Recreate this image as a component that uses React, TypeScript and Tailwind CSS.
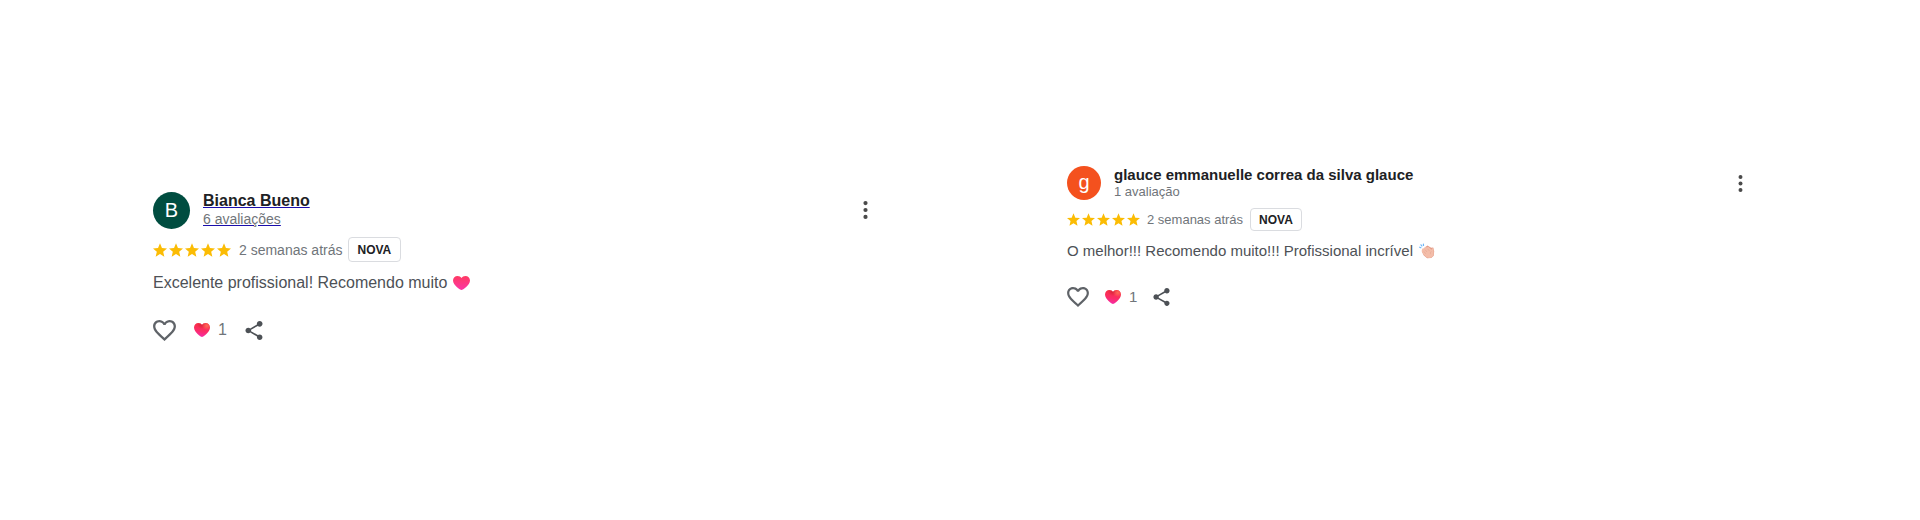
import clsx from "clsx";

type Review = {
    id: string;
    author: string;
    initial: string;
    avatarColor: string;
    count: string;
    date: string;
    text: string;
    emoji: "heart" | "clap";
    likes: number;
    large: boolean;
};

const reviews: Review[] = [
    {
        id: "bianca",
        author: "Bianca Bueno",
        initial: "B",
        avatarColor: "bg-[#004d40]",
        count: "6 avaliações",
        date: "2 semanas atrás",
        text: "Excelente profissional! Recomendo muito",
        emoji: "heart",
        likes: 1,
        large: true,
    },
    {
        id: "glauce",
        author: "glauce emmanuelle correa da silva glauce",
        initial: "g",
        avatarColor: "bg-[#f4511e]",
        count: "1 avaliação",
        date: "2 semanas atrás",
        text: "O melhor!!! Recomendo muito!!! Profissional incrível",
        emoji: "clap",
        likes: 1,
        large: false,
    },
];

// Rounder heart, as drawn in emoji sets
const emojiHeartPath =
    "M10 18C8.6 18 0 11.8 0 5.8 0 2.3 2.4 0 5.4 0 7.4 0 9.1 1 10 2.6 10.9 1 12.6 0 14.6 0 17.6 0 20 2.3 20 5.8 20 11.8 11.4 18 10 18z";

const Star = ({ className }: { className: string }) => (
    <svg viewBox="2 2 20 19" fill="#fbbc04" className={className} aria-hidden="true">
        <path d="M12 17.27 18.18 21l-1.64-7.03L22 9.24l-7.19-.61L12 2 9.19 8.63 2 9.24l5.46 4.73L5.82 21z" />
    </svg>
);

const OutlineHeart = ({ className }: { className: string }) => (
    <svg viewBox="2 3 20 18.35" fill="#5f6368" className={className} aria-hidden="true">
        <path d="M16.5 3c-1.74 0-3.41.81-4.5 2.09C10.91 3.81 9.24 3 7.5 3 4.42 3 2 5.42 2 8.5c0 3.78 3.4 6.86 8.55 11.54L12 21.35l1.45-1.32C18.6 15.36 22 12.28 22 8.5 22 5.42 19.58 3 16.5 3zm-4.4 15.55-.1.1-.1-.1C7.14 14.24 4 11.39 4 8.5 4 6.5 5.5 5 7.5 5c1.54 0 3.04.99 3.57 2.36h1.87C13.46 5.99 14.96 5 16.5 5c2 0 3.5 1.5 3.5 3.5 0 2.89-3.14 5.74-7.9 10.05z" />
    </svg>
);

const ShareIcon = ({ className }: { className: string }) => (
    <svg viewBox="3 2 18 20" fill="#4d5156" className={className} aria-hidden="true">
        <path d="M18 16.08c-.76 0-1.44.3-1.96.77L8.91 12.7c.05-.23.09-.46.09-.7s-.04-.47-.09-.7l7.05-4.11c.54.5 1.25.81 2.04.81 1.66 0 3-1.34 3-3s-1.34-3-3-3-3 1.34-3 3c0 .24.04.47.09.7L8.04 9.81C7.5 9.31 6.79 9 6 9c-1.66 0-3 1.34-3 3s1.34 3 3 3c.79 0 1.5-.31 2.04-.81l7.12 4.16c-.05.21-.08.43-.08.65 0 1.61 1.31 2.92 2.92 2.92s2.92-1.31 2.92-2.92-1.31-2.92-2.92-2.92z" />
    </svg>
);

// Plain heart emoji that closes the review text
const HeartEmoji = ({ className }: { className: string }) => (
    <svg viewBox="0 0 20 18" preserveAspectRatio="none" className={className} role="img" aria-label="coração">
        <defs>
            <linearGradient id="heart-emoji" x1="0" y1="0" x2="0" y2="1">
                <stop offset="0" stopColor="#ff3b62" />
                <stop offset="1" stopColor="#fb35a6" />
            </linearGradient>
        </defs>
        <path d={emojiHeartPath} fill="url(#heart-emoji)" />
    </svg>
);

// Shaded heart used for the reactions counter
const ReactionHeart = ({ id, className }: { id: string; className: string }) => (
    <svg viewBox="0 0 20 18" preserveAspectRatio="none" className={className} aria-hidden="true">
        <defs>
            <linearGradient id={`base-${id}`} x1="0.6" y1="0" x2="0.4" y2="1">
                <stop offset="0" stopColor="#f8303f" />
                <stop offset="0.6" stopColor="#fb2c6a" />
                <stop offset="1" stopColor="#f52cab" />
            </linearGradient>
            <radialGradient id={`shine-${id}`} cx="0.8" cy="0.2" r="0.3">
                <stop offset="0" stopColor="#ff6a58" />
                <stop offset="1" stopColor="#ff6a58" stopOpacity="0" />
            </radialGradient>
            <radialGradient id={`shade-${id}`} cx="0.48" cy="0.12" r="0.3">
                <stop offset="0" stopColor="#d8243c" />
                <stop offset="1" stopColor="#d8243c" stopOpacity="0" />
            </radialGradient>
        </defs>
        <path d={emojiHeartPath} fill={`url(#base-${id})`} />
        <path d={emojiHeartPath} fill={`url(#shade-${id})`} />
        <path d={emojiHeartPath} fill={`url(#shine-${id})`} />
    </svg>
);

const ClapEmoji = ({ className }: { className: string }) => (
    <svg viewBox="0 0 16 16" className={className} role="img" aria-label="palmas">
        <path d="M6.5 4 8.4 2.6l3.800 2.200 2-.2 1 3.600-.5 4.600-2.500 2.200-4 .2-3.400-2.700-2-4z" fill="#e39a86" />
        <path
            d="M3 6.400c.3-1.200 1.300-1.400 2-.8l.4-1c.8-1 1.800-.9 2.400-.2.8-.8 1.700-.7 2.400.1l2.200 2.300.7-1.300c.8-.6 1.500 0 1.500.9l.1 3.600c0 3-1.800 5-4.400 5-2.200 0-3.800-1.100-5-2.700L3.200 9.400c-.6-1-.6-2-.2-3z"
            fill="#f3bda9"
        />
        <path d="M6 6.600 8 9M4.800 8.400l2 2.400M8.600 5.800l2 2.400M12.400 8.400c-1 .8-1.200 1.800-.8 2.800" stroke="#e0a08d" strokeWidth="0.5" fill="none" />
        <path d="M.7 4.200l1.200.6M2 1.800l.9 1.200M4.400 1.200l.1 1.200" stroke="#6db5f7" strokeWidth="1.2" strokeLinecap="round" />
    </svg>
);

const ReviewCard = ({ review }: { review: Review }) => {
    const { large } = review;

    return (
        <article>
            <header className="flex items-center">
                <div
                    className={clsx(
                        "mr-[13px] flex shrink-0 items-center justify-center rounded-full text-xl leading-5 text-white",
                        review.avatarColor,
                        large ? "size-[37px]" : "size-[34px] pb-0.5",
                    )}
                >
                    {review.initial}
                </div>
                <a
                    href="#"
                    className={clsx("flex flex-col items-start", large && "pb-0.5 underline decoration-[#1a0dab]")}
                >
                    <span
                        className={clsx(
                            "font-bold text-[#202124]",
                            large ? "text-base leading-5" : "text-[15px] leading-[18px]",
                        )}
                    >
                        {review.author}
                    </span>
                    <span className={clsx("text-[#70757a]", large ? "text-sm leading-4" : "text-[13px] leading-4")}>
                        {review.count}
                    </span>
                </a>
                <button type="button" aria-label="Mais opções" className="ml-auto p-1">
                    <svg viewBox="0 0 5 18" fill="#4a4a4a" className={large ? "h-[18px] w-[5px]" : "h-[17px] w-[5px]"}>
                        <circle cx="2.5" cy="2.1" r="2.1" />
                        <circle cx="2.5" cy="9" r="2.1" />
                        <circle cx="2.5" cy="15.9" r="2.1" />
                    </svg>
                </button>
            </header>

            <div className="mt-2 flex items-center">
                <div className="flex gap-0.5" role="img" aria-label="5 de 5 estrelas">
                    {[1, 2, 3, 4, 5].map((n) => (
                        <Star key={n} className={large ? "size-3.5" : "size-[13px]"} />
                    ))}
                </div>
                <span className={clsx("text-[#70757a]", large ? "ml-2 text-sm" : "ml-[7px] text-[13px]")}>
                    {review.date}
                </span>
                <span
                    className={clsx(
                        "flex items-center rounded border border-[#dadce0] text-xs font-bold text-[#202124]",
                        large ? "ml-[5px] h-[25px] px-[9px]" : "ml-[7px] h-[23px] px-2",
                    )}
                >
                    NOVA
                </span>
            </div>

            <p
                className={clsx(
                    "flex items-center gap-1.5 text-[#4d5156]",
                    large ? "mt-[9px] text-base leading-6" : "mt-2 text-[15px] leading-6",
                )}
            >
                {review.text}
                {review.emoji === "heart" ? (
                    <HeartEmoji className="h-3.5 w-[17px]" />
                ) : (
                    <ClapEmoji className="size-4" />
                )}
            </p>

            <div className={clsx("flex items-center", large ? "mt-[23px]" : "mt-[22px]")}>
                <button type="button" aria-label="Curtir">
                    <OutlineHeart className={large ? "h-[21px] w-[23px]" : "h-5 w-[22px]"} />
                </button>
                <span
                    className={clsx(
                        "flex items-center gap-2 text-[#70757a]",
                        large ? "ml-[18px] text-base leading-6" : "ml-4 text-[15px] leading-6",
                    )}
                >
                    <ReactionHeart id={review.id} className="h-3.5 w-4" />
                    {review.likes}
                </span>
                <button type="button" aria-label="Compartilhar" className={large ? "ml-[18px]" : "ml-4"}>
                    <ShareIcon className={large ? "h-[19px] w-[18px]" : "h-[18px] w-[17px]"} />
                </button>
            </div>
        </article>
    );
};

const App = () => {
    return (
        <main className="grid min-h-screen grid-cols-2 items-start bg-white font-['Liberation_Sans',Arial,sans-serif]">
            <section className="pt-[191px] pr-[88px] pl-[153px]">
                <ReviewCard review={reviews[0]} />
            </section>
            <section className="pt-[166px] pr-[173px] pl-[107px]">
                <ReviewCard review={reviews[1]} />
            </section>
        </main>
    );
};

export default App;
